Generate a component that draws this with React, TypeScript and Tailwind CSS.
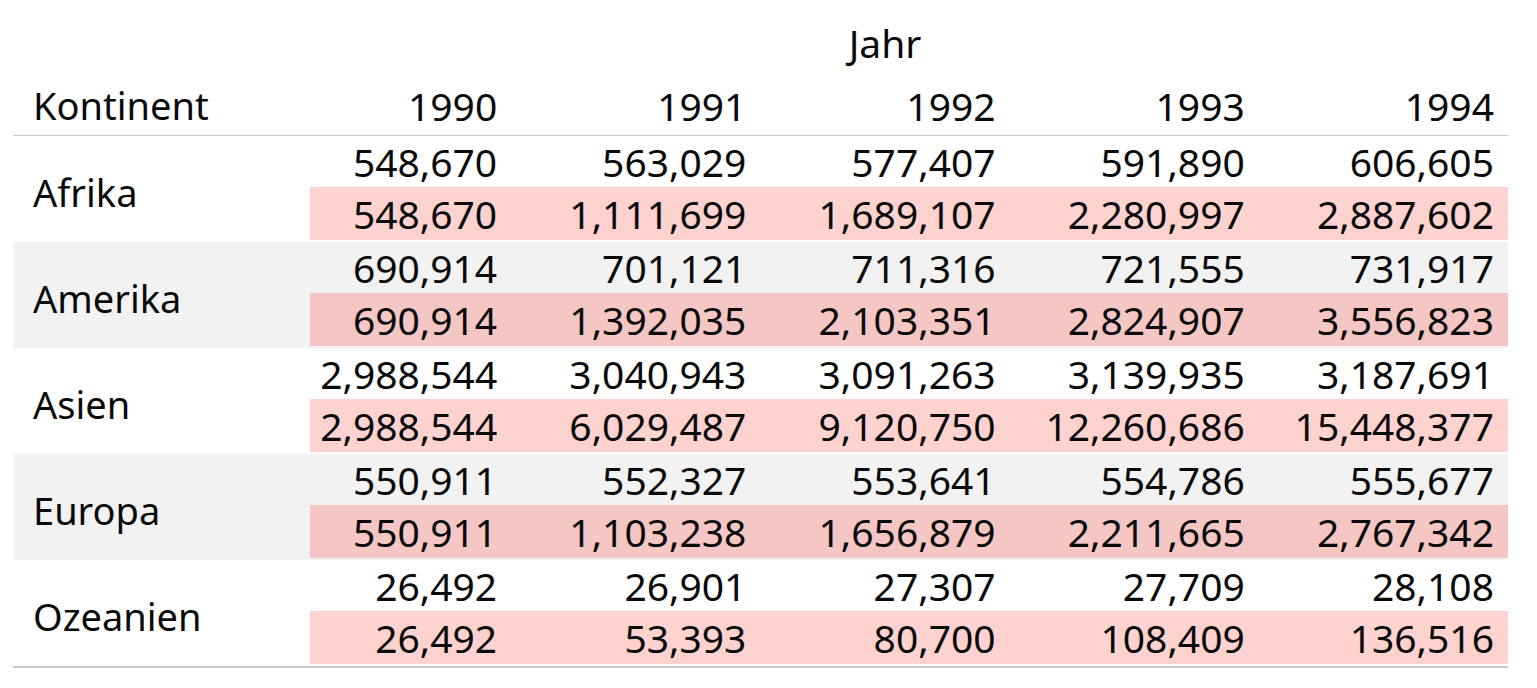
import React from "react";

const years = ["1990", "1991", "1992", "1993", "1994"];

const data: { name: string; vals: string[]; cum: string[] }[] = [
  {
    name: "Afrika",
    vals: ["548,670", "563,029", "577,407", "591,890", "606,605"],
    cum: ["548,670", "1,111,699", "1,689,107", "2,280,997", "2,887,602"],
  },
  {
    name: "Amerika",
    vals: ["690,914", "701,121", "711,316", "721,555", "731,917"],
    cum: ["690,914", "1,392,035", "2,103,351", "2,824,907", "3,556,823"],
  },
  {
    name: "Asien",
    vals: ["2,988,544", "3,040,943", "3,091,263", "3,139,935", "3,187,691"],
    cum: ["2,988,544", "6,029,487", "9,120,750", "12,260,686", "15,448,377"],
  },
  {
    name: "Europa",
    vals: ["550,911", "552,327", "553,641", "554,786", "555,677"],
    cum: ["550,911", "1,103,238", "1,656,879", "2,211,665", "2,767,342"],
  },
  {
    name: "Ozeanien",
    vals: ["26,492", "26,901", "27,307", "27,709", "28,108"],
    cum: ["26,492", "53,393", "80,700", "108,409", "136,516"],
  },
];

export default function App() {
  return (
    <div
      className="w-[1537px] h-[688px] bg-white text-[#0a0a0a] text-[38px] leading-[53px] pl-[13px]"
      style={{ fontFamily: '"Noto Sans", "Open Sans", sans-serif' }}
    >
      <div className="w-[1495px]">
        {/* Jahr header */}
        <div className="grid grid-cols-[249px_1fr] pt-[16px]">
          <div />
          <div className="h-[53px] text-center text-[39px]">Jahr</div>
        </div>
        {/* Column header */}
        <div className="grid grid-cols-[249px_repeat(5,1fr)] mt-[10px] h-[57px] border-b border-[#c9c9c9]">
          <div className="pl-[20px] h-[53px]">Kontinent</div>
          {years.map((y) => (
            <div key={y} className="text-right pr-[14px] h-[53px] text-[39px]">
              {y}
            </div>
          ))}
        </div>
        {/* Body */}
        <div className="border-b-2 border-[#c9c9c9]">
          {data.map((row, i) => {
            const shaded = i % 2 === 1;
            return (
              <div
                key={row.name}
                className={`grid grid-cols-[249px_repeat(5,1fr)] h-[106px] ${
                  shaded ? "bg-[#f2f2f2]" : "bg-white"
                }`}
              >
                <div className="pl-[20px] pt-[6px] flex items-center">{row.name}</div>
                {row.vals.map((v, j) => (
                  <div key={j} className="flex flex-col text-[39px]">
                    <div className="h-[51px] leading-[51px] text-right pr-[14px]">{v}</div>
                    <div
                      className={`h-[53px] text-right pr-[14px] ${
                        j === 0 ? "ml-[48px]" : ""
                      } ${shaded ? "bg-[#f4c6c4]" : "bg-[#fdd2cf]"}`}
                    >
                      {row.cum[j]}
                    </div>
                  </div>
                ))}
              </div>
            );
          })}
        </div>
      </div>
    </div>
  );
}
